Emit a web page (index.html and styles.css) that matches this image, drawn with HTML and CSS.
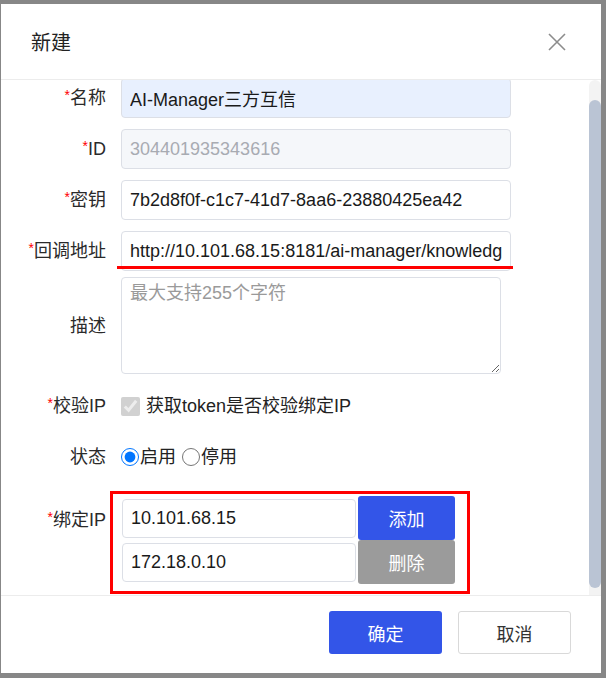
FILE: index.html
```html
<!DOCTYPE html>
<html>
<head>
	<meta charset="utf-8">
	<title>新建</title>
	<link rel="stylesheet" href="styles.css">
</head>
<body>
	<div class="dlg">
		<div class="dlg-head">
			<span class="dlg-title">新建</span>
			<svg class="dlg-close" width="18" height="18" viewBox="0 0 18 18">
				<path d="M1 1L17 17M17 1L1 17" stroke="#8c8c8c" stroke-width="1.6" fill="none"/>
			</svg>
		</div>

		<div class="dlg-body">
			<form class="form">
				<div class="row">
					<label class="lbl"><i>*</i>名称</label>
					<input class="ipt ipt-fill" type="text" value="AI-Manager三方互信">
				</div>
				<div class="row">
					<label class="lbl"><i>*</i>ID</label>
					<input class="ipt" type="text" value="304401935343616" disabled>
				</div>
				<div class="row">
					<label class="lbl"><i>*</i>密钥</label>
					<input class="ipt" type="text" value="7b2d8f0f-c1c7-41d7-8aa6-23880425ea42">
				</div>
				<div class="row row-url">
					<label class="lbl"><i>*</i>回调地址</label>
					<div class="mark-line">
						<input class="ipt" type="text" value="http://10.101.68.15:8181/ai-manager/knowledge/callback">
					</div>
				</div>
				<div class="row row-desc">
					<label class="lbl">描述</label>
					<textarea class="txt" placeholder="最大支持255个字符"></textarea>
				</div>
				<div class="row row-chk">
					<label class="lbl"><i>*</i>校验IP</label>
					<label class="chk"><input type="checkbox" checked disabled>获取token是否校验绑定IP</label>
				</div>
				<div class="row row-rad">
					<label class="lbl">状态</label>
					<label class="rad"><input type="radio" name="status" checked>启用</label>
					<label class="rad"><input type="radio" name="status">停用</label>
				</div>
				<div class="row row-ip">
					<label class="lbl"><i>*</i>绑定IP</label>
					<div class="ip-box">
						<div class="ip-line">
							<input class="ipt ipt-ip" type="text" value="10.101.68.15">
							<button type="button" class="btn btn-blue">添加</button>
						</div>
						<div class="ip-line">
							<input class="ipt ipt-ip" type="text" value="172.18.0.10">
							<button type="button" class="btn btn-gray">删除</button>
						</div>
					</div>
				</div>
			</form>
			<div class="sbar">
				<div class="sbar-thumb"></div>
			</div>
		</div>

		<div class="dlg-foot">
			<button type="button" class="btn btn-blue btn-foot">确定</button>
			<button type="button" class="btn btn-plain btn-foot">取消</button>
		</div>
	</div>
</body>
</html>
```

FILE: styles.css
```css
html, body {
	margin: 0;
	padding: 0;
}

body {
	width: 606px;
	height: 678px;
	background-color: #878787;
	font-family: "Liberation Sans", "Noto Sans CJK SC", sans-serif;
	font-size: 18px;
	color: #333;
	overflow: hidden;
}

.dlg {
	width: 600px;
	height: 669px;
	margin: 4px 0 0 1px;
	background-color: #fff;
	display: flex;
	flex-direction: column;
}

.dlg-head {
	height: 75px;
	flex: 0 0 75px;
	border-bottom: 1px solid #ececec;
	display: flex;
	align-items: center;
	justify-content: space-between;
	padding: 0 35px 0 30px;
}

.dlg-title {
	font-size: 20px;
	color: #222;
}

/* body is shown scrolled by a couple of pixels */
.dlg-body {
	height: 515px;
	flex: 0 0 515px;
	overflow: hidden;
	display: flex;
}

.form {
	flex: 1 1 auto;
	margin: -2px 0 0 0;
	padding: 0;
}

.sbar {
	flex: 0 0 12px;
	height: 516px;
	background-color: #f3f3f3;
	border-radius: 6px 6px 0 0;
}

.sbar-thumb {
	margin-top: 20px;
	height: 488px;
	background-color: #bac4d4;
	border-radius: 6px;
}

.row {
	display: flex;
	align-items: center;
	gap: 15px;
	margin-bottom: 11px;
}

.lbl {
	flex: 0 0 105px;
	text-align: right;
	line-height: 24px;
	color: #2a2a2a;
	white-space: nowrap;
}

.lbl i {
	font-style: normal;
	color: #f00;
	font-size: 14px;
	vertical-align: top;
	line-height: 18px;
}

.ipt {
	box-sizing: border-box;
	width: 390px;
	height: 40px;
	padding: 0 8px;
	border: 1px solid #dcdfe6;
	border-radius: 4px;
	font-family: "Liberation Sans", "Noto Sans CJK SC", sans-serif;
	font-size: 18px;
	color: #1a1a1a;
	background-color: #fff;
	outline: none;
}

.ipt-fill {
	background-color: #e8f0fe;
}

.ipt:disabled {
	background-color: #f5f7fa;
	color: #a8abb2;
}

.row-url {
	margin-bottom: 6px;
}

.mark-line {
	position: relative;
	height: 40px;
}

/* red annotation under the callback field */
.mark-line::after {
	content: "";
	position: absolute;
	left: -4px;
	right: -2px;
	top: 35px;
	height: 3px;
	background-color: #f00;
}

.txt {
	box-sizing: border-box;
	width: 380px;
	height: 97px;
	padding: 2px 8px;
	border: 1px solid #dcdfe6;
	border-radius: 4px;
	font-family: "Liberation Sans", "Noto Sans CJK SC", sans-serif;
	font-size: 18px;
	line-height: 26px;
	color: #1a1a1a;
	outline: none;
	display: block;
}

.txt::placeholder {
	color: #9a9a9a;
}

.row-desc {
	margin-bottom: 12px;
}

.row-chk,
.row-rad {
	height: 40px;
}

.row-rad {
	margin-bottom: 14px;
}

.chk,
.rad {
	display: flex;
	align-items: center;
	line-height: 24px;
	color: #222;
}

.chk input {
	width: 19px;
	height: 19px;
	margin: 0 6px 0 0;
}

.rad input {
	width: 18px;
	height: 18px;
	margin: 0 1px 0 0;
}

.row-rad .rad + .rad {
	margin-left: -9px;
}

.row-ip {
	align-items: flex-start;
	margin-bottom: 0;
}

.row-ip .lbl {
	margin-top: 17px;
}

/* red annotation box round the ip list */
.ip-box {
	margin-left: -11px;
	border: 3px solid #f00;
	padding: 2px 12px 7px 9px;
}

.ip-line {
	display: flex;
	align-items: center;
	gap: 2px;
	height: 44px;
}

.ipt-ip {
	width: 234px;
	height: 39px;
}

.btn {
	box-sizing: border-box;
	border: none;
	border-radius: 3px;
	font-family: "Liberation Sans", "Noto Sans CJK SC", sans-serif;
	font-size: 18px;
	cursor: pointer;
	padding: 0;
}

.ip-line .btn {
	width: 97px;
	height: 44px;
}

.btn-blue {
	background-color: #3355e8;
	color: #fff;
}

.btn-gray {
	background-color: #9b9b9b;
	color: #fff;
}

.btn-plain {
	background-color: #fff;
	color: #333;
	border: 1px solid #d9d9d9;
}

.dlg-foot {
	flex: 1 1 auto;
	border-top: 1px solid #ececec;
	display: flex;
	justify-content: flex-end;
	align-items: flex-start;
	gap: 16px;
	padding: 15px 30px 0 0;
}

.btn-foot {
	width: 113px;
	height: 43px;
}
```
